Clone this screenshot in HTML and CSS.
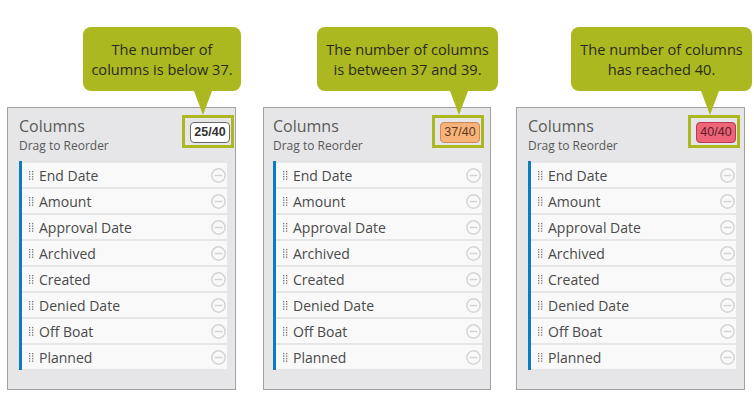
FILE: index.html
```html
<!DOCTYPE html>
<html lang="en">
<head>
<meta charset="utf-8">
<title>Column limit states</title>
<link rel="stylesheet" href="styles.css">
</head>
<body>
<div class="stage">

  <section class="demo demo--low">
    <div class="callout">The number of<br>columns is below 37.</div>
    <div class="panel">
      <header class="panel-head">
        <div class="panel-titles">
          <h2 class="panel-title">Columns</h2>
          <p class="panel-sub">Drag to Reorder</p>
        </div>
        <div class="count-frame"><span class="count count--ok">25/40</span></div>
      </header>
      <ul class="col-list">
        <li class="col-item"><svg class="grip" viewBox="0 0 5 9"><rect x="0" y="0" width="1.3" height="1.3"/><rect x="3" y="0" width="1.3" height="1.3"/><rect x="0" y="2.5" width="1.3" height="1.3"/><rect x="3" y="2.5" width="1.3" height="1.3"/><rect x="0" y="5" width="1.3" height="1.3"/><rect x="3" y="5" width="1.3" height="1.3"/><rect x="0" y="7.5" width="1.3" height="1.3"/><rect x="3" y="7.5" width="1.3" height="1.3"/></svg><span class="col-name">End Date</span><svg class="remove" viewBox="0 0 14 14"><circle cx="7" cy="7" r="6.2"/><line x1="3.4" y1="7" x2="10.6" y2="7"/></svg></li>
        <li class="col-item"><svg class="grip" viewBox="0 0 5 9"><rect x="0" y="0" width="1.3" height="1.3"/><rect x="3" y="0" width="1.3" height="1.3"/><rect x="0" y="2.5" width="1.3" height="1.3"/><rect x="3" y="2.5" width="1.3" height="1.3"/><rect x="0" y="5" width="1.3" height="1.3"/><rect x="3" y="5" width="1.3" height="1.3"/><rect x="0" y="7.5" width="1.3" height="1.3"/><rect x="3" y="7.5" width="1.3" height="1.3"/></svg><span class="col-name">Amount</span><svg class="remove" viewBox="0 0 14 14"><circle cx="7" cy="7" r="6.2"/><line x1="3.4" y1="7" x2="10.6" y2="7"/></svg></li>
        <li class="col-item"><svg class="grip" viewBox="0 0 5 9"><rect x="0" y="0" width="1.3" height="1.3"/><rect x="3" y="0" width="1.3" height="1.3"/><rect x="0" y="2.5" width="1.3" height="1.3"/><rect x="3" y="2.5" width="1.3" height="1.3"/><rect x="0" y="5" width="1.3" height="1.3"/><rect x="3" y="5" width="1.3" height="1.3"/><rect x="0" y="7.5" width="1.3" height="1.3"/><rect x="3" y="7.5" width="1.3" height="1.3"/></svg><span class="col-name">Approval Date</span><svg class="remove" viewBox="0 0 14 14"><circle cx="7" cy="7" r="6.2"/><line x1="3.4" y1="7" x2="10.6" y2="7"/></svg></li>
        <li class="col-item"><svg class="grip" viewBox="0 0 5 9"><rect x="0" y="0" width="1.3" height="1.3"/><rect x="3" y="0" width="1.3" height="1.3"/><rect x="0" y="2.5" width="1.3" height="1.3"/><rect x="3" y="2.5" width="1.3" height="1.3"/><rect x="0" y="5" width="1.3" height="1.3"/><rect x="3" y="5" width="1.3" height="1.3"/><rect x="0" y="7.5" width="1.3" height="1.3"/><rect x="3" y="7.5" width="1.3" height="1.3"/></svg><span class="col-name">Archived</span><svg class="remove" viewBox="0 0 14 14"><circle cx="7" cy="7" r="6.2"/><line x1="3.4" y1="7" x2="10.6" y2="7"/></svg></li>
        <li class="col-item"><svg class="grip" viewBox="0 0 5 9"><rect x="0" y="0" width="1.3" height="1.3"/><rect x="3" y="0" width="1.3" height="1.3"/><rect x="0" y="2.5" width="1.3" height="1.3"/><rect x="3" y="2.5" width="1.3" height="1.3"/><rect x="0" y="5" width="1.3" height="1.3"/><rect x="3" y="5" width="1.3" height="1.3"/><rect x="0" y="7.5" width="1.3" height="1.3"/><rect x="3" y="7.5" width="1.3" height="1.3"/></svg><span class="col-name">Created</span><svg class="remove" viewBox="0 0 14 14"><circle cx="7" cy="7" r="6.2"/><line x1="3.4" y1="7" x2="10.6" y2="7"/></svg></li>
        <li class="col-item"><svg class="grip" viewBox="0 0 5 9"><rect x="0" y="0" width="1.3" height="1.3"/><rect x="3" y="0" width="1.3" height="1.3"/><rect x="0" y="2.5" width="1.3" height="1.3"/><rect x="3" y="2.5" width="1.3" height="1.3"/><rect x="0" y="5" width="1.3" height="1.3"/><rect x="3" y="5" width="1.3" height="1.3"/><rect x="0" y="7.5" width="1.3" height="1.3"/><rect x="3" y="7.5" width="1.3" height="1.3"/></svg><span class="col-name">Denied Date</span><svg class="remove" viewBox="0 0 14 14"><circle cx="7" cy="7" r="6.2"/><line x1="3.4" y1="7" x2="10.6" y2="7"/></svg></li>
        <li class="col-item"><svg class="grip" viewBox="0 0 5 9"><rect x="0" y="0" width="1.3" height="1.3"/><rect x="3" y="0" width="1.3" height="1.3"/><rect x="0" y="2.5" width="1.3" height="1.3"/><rect x="3" y="2.5" width="1.3" height="1.3"/><rect x="0" y="5" width="1.3" height="1.3"/><rect x="3" y="5" width="1.3" height="1.3"/><rect x="0" y="7.5" width="1.3" height="1.3"/><rect x="3" y="7.5" width="1.3" height="1.3"/></svg><span class="col-name">Off Boat</span><svg class="remove" viewBox="0 0 14 14"><circle cx="7" cy="7" r="6.2"/><line x1="3.4" y1="7" x2="10.6" y2="7"/></svg></li>
        <li class="col-item"><svg class="grip" viewBox="0 0 5 9"><rect x="0" y="0" width="1.3" height="1.3"/><rect x="3" y="0" width="1.3" height="1.3"/><rect x="0" y="2.5" width="1.3" height="1.3"/><rect x="3" y="2.5" width="1.3" height="1.3"/><rect x="0" y="5" width="1.3" height="1.3"/><rect x="3" y="5" width="1.3" height="1.3"/><rect x="0" y="7.5" width="1.3" height="1.3"/><rect x="3" y="7.5" width="1.3" height="1.3"/></svg><span class="col-name">Planned</span><svg class="remove" viewBox="0 0 14 14"><circle cx="7" cy="7" r="6.2"/><line x1="3.4" y1="7" x2="10.6" y2="7"/></svg></li>
      </ul>
    </div>
  </section>

  <section class="demo demo--near">
    <div class="callout">The number of columns<br>is between 37 and 39.</div>
    <div class="panel">
      <header class="panel-head">
        <div class="panel-titles">
          <h2 class="panel-title">Columns</h2>
          <p class="panel-sub">Drag to Reorder</p>
        </div>
        <div class="count-frame"><span class="count count--warn">37/40</span></div>
      </header>
      <ul class="col-list">
        <li class="col-item"><svg class="grip" viewBox="0 0 5 9"><rect x="0" y="0" width="1.3" height="1.3"/><rect x="3" y="0" width="1.3" height="1.3"/><rect x="0" y="2.5" width="1.3" height="1.3"/><rect x="3" y="2.5" width="1.3" height="1.3"/><rect x="0" y="5" width="1.3" height="1.3"/><rect x="3" y="5" width="1.3" height="1.3"/><rect x="0" y="7.5" width="1.3" height="1.3"/><rect x="3" y="7.5" width="1.3" height="1.3"/></svg><span class="col-name">End Date</span><svg class="remove" viewBox="0 0 14 14"><circle cx="7" cy="7" r="6.2"/><line x1="3.4" y1="7" x2="10.6" y2="7"/></svg></li>
        <li class="col-item"><svg class="grip" viewBox="0 0 5 9"><rect x="0" y="0" width="1.3" height="1.3"/><rect x="3" y="0" width="1.3" height="1.3"/><rect x="0" y="2.5" width="1.3" height="1.3"/><rect x="3" y="2.5" width="1.3" height="1.3"/><rect x="0" y="5" width="1.3" height="1.3"/><rect x="3" y="5" width="1.3" height="1.3"/><rect x="0" y="7.5" width="1.3" height="1.3"/><rect x="3" y="7.5" width="1.3" height="1.3"/></svg><span class="col-name">Amount</span><svg class="remove" viewBox="0 0 14 14"><circle cx="7" cy="7" r="6.2"/><line x1="3.4" y1="7" x2="10.6" y2="7"/></svg></li>
        <li class="col-item"><svg class="grip" viewBox="0 0 5 9"><rect x="0" y="0" width="1.3" height="1.3"/><rect x="3" y="0" width="1.3" height="1.3"/><rect x="0" y="2.5" width="1.3" height="1.3"/><rect x="3" y="2.5" width="1.3" height="1.3"/><rect x="0" y="5" width="1.3" height="1.3"/><rect x="3" y="5" width="1.3" height="1.3"/><rect x="0" y="7.5" width="1.3" height="1.3"/><rect x="3" y="7.5" width="1.3" height="1.3"/></svg><span class="col-name">Approval Date</span><svg class="remove" viewBox="0 0 14 14"><circle cx="7" cy="7" r="6.2"/><line x1="3.4" y1="7" x2="10.6" y2="7"/></svg></li>
        <li class="col-item"><svg class="grip" viewBox="0 0 5 9"><rect x="0" y="0" width="1.3" height="1.3"/><rect x="3" y="0" width="1.3" height="1.3"/><rect x="0" y="2.5" width="1.3" height="1.3"/><rect x="3" y="2.5" width="1.3" height="1.3"/><rect x="0" y="5" width="1.3" height="1.3"/><rect x="3" y="5" width="1.3" height="1.3"/><rect x="0" y="7.5" width="1.3" height="1.3"/><rect x="3" y="7.5" width="1.3" height="1.3"/></svg><span class="col-name">Archived</span><svg class="remove" viewBox="0 0 14 14"><circle cx="7" cy="7" r="6.2"/><line x1="3.4" y1="7" x2="10.6" y2="7"/></svg></li>
        <li class="col-item"><svg class="grip" viewBox="0 0 5 9"><rect x="0" y="0" width="1.3" height="1.3"/><rect x="3" y="0" width="1.3" height="1.3"/><rect x="0" y="2.5" width="1.3" height="1.3"/><rect x="3" y="2.5" width="1.3" height="1.3"/><rect x="0" y="5" width="1.3" height="1.3"/><rect x="3" y="5" width="1.3" height="1.3"/><rect x="0" y="7.5" width="1.3" height="1.3"/><rect x="3" y="7.5" width="1.3" height="1.3"/></svg><span class="col-name">Created</span><svg class="remove" viewBox="0 0 14 14"><circle cx="7" cy="7" r="6.2"/><line x1="3.4" y1="7" x2="10.6" y2="7"/></svg></li>
        <li class="col-item"><svg class="grip" viewBox="0 0 5 9"><rect x="0" y="0" width="1.3" height="1.3"/><rect x="3" y="0" width="1.3" height="1.3"/><rect x="0" y="2.5" width="1.3" height="1.3"/><rect x="3" y="2.5" width="1.3" height="1.3"/><rect x="0" y="5" width="1.3" height="1.3"/><rect x="3" y="5" width="1.3" height="1.3"/><rect x="0" y="7.5" width="1.3" height="1.3"/><rect x="3" y="7.5" width="1.3" height="1.3"/></svg><span class="col-name">Denied Date</span><svg class="remove" viewBox="0 0 14 14"><circle cx="7" cy="7" r="6.2"/><line x1="3.4" y1="7" x2="10.6" y2="7"/></svg></li>
        <li class="col-item"><svg class="grip" viewBox="0 0 5 9"><rect x="0" y="0" width="1.3" height="1.3"/><rect x="3" y="0" width="1.3" height="1.3"/><rect x="0" y="2.5" width="1.3" height="1.3"/><rect x="3" y="2.5" width="1.3" height="1.3"/><rect x="0" y="5" width="1.3" height="1.3"/><rect x="3" y="5" width="1.3" height="1.3"/><rect x="0" y="7.5" width="1.3" height="1.3"/><rect x="3" y="7.5" width="1.3" height="1.3"/></svg><span class="col-name">Off Boat</span><svg class="remove" viewBox="0 0 14 14"><circle cx="7" cy="7" r="6.2"/><line x1="3.4" y1="7" x2="10.6" y2="7"/></svg></li>
        <li class="col-item"><svg class="grip" viewBox="0 0 5 9"><rect x="0" y="0" width="1.3" height="1.3"/><rect x="3" y="0" width="1.3" height="1.3"/><rect x="0" y="2.5" width="1.3" height="1.3"/><rect x="3" y="2.5" width="1.3" height="1.3"/><rect x="0" y="5" width="1.3" height="1.3"/><rect x="3" y="5" width="1.3" height="1.3"/><rect x="0" y="7.5" width="1.3" height="1.3"/><rect x="3" y="7.5" width="1.3" height="1.3"/></svg><span class="col-name">Planned</span><svg class="remove" viewBox="0 0 14 14"><circle cx="7" cy="7" r="6.2"/><line x1="3.4" y1="7" x2="10.6" y2="7"/></svg></li>
      </ul>
    </div>
  </section>

  <section class="demo demo--full">
    <div class="callout">The number of columns<br>has reached 40.</div>
    <div class="panel">
      <header class="panel-head">
        <div class="panel-titles">
          <h2 class="panel-title">Columns</h2>
          <p class="panel-sub">Drag to Reorder</p>
        </div>
        <div class="count-frame"><span class="count count--full">40/40</span></div>
      </header>
      <ul class="col-list">
        <li class="col-item"><svg class="grip" viewBox="0 0 5 9"><rect x="0" y="0" width="1.3" height="1.3"/><rect x="3" y="0" width="1.3" height="1.3"/><rect x="0" y="2.5" width="1.3" height="1.3"/><rect x="3" y="2.5" width="1.3" height="1.3"/><rect x="0" y="5" width="1.3" height="1.3"/><rect x="3" y="5" width="1.3" height="1.3"/><rect x="0" y="7.5" width="1.3" height="1.3"/><rect x="3" y="7.5" width="1.3" height="1.3"/></svg><span class="col-name">End Date</span><svg class="remove" viewBox="0 0 14 14"><circle cx="7" cy="7" r="6.2"/><line x1="3.4" y1="7" x2="10.6" y2="7"/></svg></li>
        <li class="col-item"><svg class="grip" viewBox="0 0 5 9"><rect x="0" y="0" width="1.3" height="1.3"/><rect x="3" y="0" width="1.3" height="1.3"/><rect x="0" y="2.5" width="1.3" height="1.3"/><rect x="3" y="2.5" width="1.3" height="1.3"/><rect x="0" y="5" width="1.3" height="1.3"/><rect x="3" y="5" width="1.3" height="1.3"/><rect x="0" y="7.5" width="1.3" height="1.3"/><rect x="3" y="7.5" width="1.3" height="1.3"/></svg><span class="col-name">Amount</span><svg class="remove" viewBox="0 0 14 14"><circle cx="7" cy="7" r="6.2"/><line x1="3.4" y1="7" x2="10.6" y2="7"/></svg></li>
        <li class="col-item"><svg class="grip" viewBox="0 0 5 9"><rect x="0" y="0" width="1.3" height="1.3"/><rect x="3" y="0" width="1.3" height="1.3"/><rect x="0" y="2.5" width="1.3" height="1.3"/><rect x="3" y="2.5" width="1.3" height="1.3"/><rect x="0" y="5" width="1.3" height="1.3"/><rect x="3" y="5" width="1.3" height="1.3"/><rect x="0" y="7.5" width="1.3" height="1.3"/><rect x="3" y="7.5" width="1.3" height="1.3"/></svg><span class="col-name">Approval Date</span><svg class="remove" viewBox="0 0 14 14"><circle cx="7" cy="7" r="6.2"/><line x1="3.4" y1="7" x2="10.6" y2="7"/></svg></li>
        <li class="col-item"><svg class="grip" viewBox="0 0 5 9"><rect x="0" y="0" width="1.3" height="1.3"/><rect x="3" y="0" width="1.3" height="1.3"/><rect x="0" y="2.5" width="1.3" height="1.3"/><rect x="3" y="2.5" width="1.3" height="1.3"/><rect x="0" y="5" width="1.3" height="1.3"/><rect x="3" y="5" width="1.3" height="1.3"/><rect x="0" y="7.5" width="1.3" height="1.3"/><rect x="3" y="7.5" width="1.3" height="1.3"/></svg><span class="col-name">Archived</span><svg class="remove" viewBox="0 0 14 14"><circle cx="7" cy="7" r="6.2"/><line x1="3.4" y1="7" x2="10.6" y2="7"/></svg></li>
        <li class="col-item"><svg class="grip" viewBox="0 0 5 9"><rect x="0" y="0" width="1.3" height="1.3"/><rect x="3" y="0" width="1.3" height="1.3"/><rect x="0" y="2.5" width="1.3" height="1.3"/><rect x="3" y="2.5" width="1.3" height="1.3"/><rect x="0" y="5" width="1.3" height="1.3"/><rect x="3" y="5" width="1.3" height="1.3"/><rect x="0" y="7.5" width="1.3" height="1.3"/><rect x="3" y="7.5" width="1.3" height="1.3"/></svg><span class="col-name">Created</span><svg class="remove" viewBox="0 0 14 14"><circle cx="7" cy="7" r="6.2"/><line x1="3.4" y1="7" x2="10.6" y2="7"/></svg></li>
        <li class="col-item"><svg class="grip" viewBox="0 0 5 9"><rect x="0" y="0" width="1.3" height="1.3"/><rect x="3" y="0" width="1.3" height="1.3"/><rect x="0" y="2.5" width="1.3" height="1.3"/><rect x="3" y="2.5" width="1.3" height="1.3"/><rect x="0" y="5" width="1.3" height="1.3"/><rect x="3" y="5" width="1.3" height="1.3"/><rect x="0" y="7.5" width="1.3" height="1.3"/><rect x="3" y="7.5" width="1.3" height="1.3"/></svg><span class="col-name">Denied Date</span><svg class="remove" viewBox="0 0 14 14"><circle cx="7" cy="7" r="6.2"/><line x1="3.4" y1="7" x2="10.6" y2="7"/></svg></li>
        <li class="col-item"><svg class="grip" viewBox="0 0 5 9"><rect x="0" y="0" width="1.3" height="1.3"/><rect x="3" y="0" width="1.3" height="1.3"/><rect x="0" y="2.5" width="1.3" height="1.3"/><rect x="3" y="2.5" width="1.3" height="1.3"/><rect x="0" y="5" width="1.3" height="1.3"/><rect x="3" y="5" width="1.3" height="1.3"/><rect x="0" y="7.5" width="1.3" height="1.3"/><rect x="3" y="7.5" width="1.3" height="1.3"/></svg><span class="col-name">Off Boat</span><svg class="remove" viewBox="0 0 14 14"><circle cx="7" cy="7" r="6.2"/><line x1="3.4" y1="7" x2="10.6" y2="7"/></svg></li>
        <li class="col-item"><svg class="grip" viewBox="0 0 5 9"><rect x="0" y="0" width="1.3" height="1.3"/><rect x="3" y="0" width="1.3" height="1.3"/><rect x="0" y="2.5" width="1.3" height="1.3"/><rect x="3" y="2.5" width="1.3" height="1.3"/><rect x="0" y="5" width="1.3" height="1.3"/><rect x="3" y="5" width="1.3" height="1.3"/><rect x="0" y="7.5" width="1.3" height="1.3"/><rect x="3" y="7.5" width="1.3" height="1.3"/></svg><span class="col-name">Planned</span><svg class="remove" viewBox="0 0 14 14"><circle cx="7" cy="7" r="6.2"/><line x1="3.4" y1="7" x2="10.6" y2="7"/></svg></li>
      </ul>
    </div>
  </section>

</div>
</body>
</html>
```
FILE: styles.css
```css
* { box-sizing: border-box; }

html, body {
  margin: 0;
  padding: 0;
  background: #ffffff;
}

body {
  font-family: "Open Sans", "Noto Sans", sans-serif;
  color: #4a4a4a;
}

/* three side-by-side examples */
.stage {
  display: flex;
  align-items: flex-start;
  gap: 26px;
  padding: 27px 0 0 7px;
}

.demo {
  display: flex;
  flex-direction: column;
  width: 229px;
}
.demo--near {
  width: 228px;
  margin-left: 1px;
}
.demo--full { margin-left: -1px; }

/* speech-bubble annotation */
.callout {
  position: relative;
  align-self: flex-end;
  margin-right: -7px;
  width: 181px;
  padding: 12px 4px;
  background: #abb820;
  border-radius: 8px;
  font-size: 14.6px;
  line-height: 20px;
  color: #2b2b1c;
  text-align: center;
}
.demo--low .callout {
  width: 158px;
  margin-right: -5px;
}
.callout::after {
  content: "";
  position: absolute;
  top: 100%;
  right: 30px;
  width: 0;
  height: 0;
  border-left: 9px solid transparent;
  border-right: 9px solid transparent;
  border-top: 24px solid #abb820;
}
.demo--low .callout::after { right: 29px; }
.demo--full .callout::after { right: 33px; }

/* columns widget */
.panel {
  margin-top: 16px;
  background: #e6e6e8;
  border: 1px solid #a2a2a2;
  padding: 7px 8px 19px 11px;
}
.demo--near .panel { padding-left: 9px; }

.panel-head {
  display: flex;
  justify-content: space-between;
  align-items: flex-start;
}

.panel-title {
  margin: 0;
  font-size: 16px;
  line-height: 22px;
  font-weight: 400;
  color: #5a5a5a;
}

.panel-sub {
  margin: 0;
  font-size: 12px;
  line-height: 17px;
  color: #585858;
}

.count-frame {
  border: 3px solid #abb820;
  padding: 4px 1px 2px 5px;
  margin-right: -7px;
}
.demo--near .count-frame { margin-right: -2px; }
.demo--full .count-frame { margin-right: -4px; }

.count {
  display: block;
  width: 40px;
  height: 21px;
  border: 1px solid #6a6a6a;
  border-radius: 4px;
  font-family: "Liberation Sans", Arial, sans-serif;
  font-size: 12.5px;
  font-weight: 700;
  line-height: 19px;
  text-align: center;
}
.count--ok {
  background: #ffffff;
  color: #333333;
}
.count--warn {
  background: #f9b37a;
  border-color: #cf8a55;
  color: #5b3c22;
  font-weight: 400;
}
.count--full {
  background: #ee6478;
  border-color: #b83a4c;
  color: #5a1c2a;
  font-weight: 400;
}

/* sortable list */
.col-list {
  list-style: none;
  margin: 7px 0 0;
  padding: 2px 0 1px;
  border-left: 3px solid #0b7cc0;
  display: flex;
  flex-direction: column;
  gap: 2px;
}

.col-item {
  display: flex;
  align-items: center;
  height: 24px;
  padding: 0 1px 0 7px;
  background: #f9f9f9;
  font-size: 14px;
  color: #4a4a4a;
}

.grip {
  width: 5px;
  height: 9px;
  margin-right: 5px;
  fill: #777777;
  flex: none;
}

.col-name {
  flex: 1;
  white-space: nowrap;
}

.remove {
  width: 15px;
  height: 15px;
  flex: none;
  fill: none;
  stroke: #d4d4d4;
  stroke-width: 1.4;
}
```
